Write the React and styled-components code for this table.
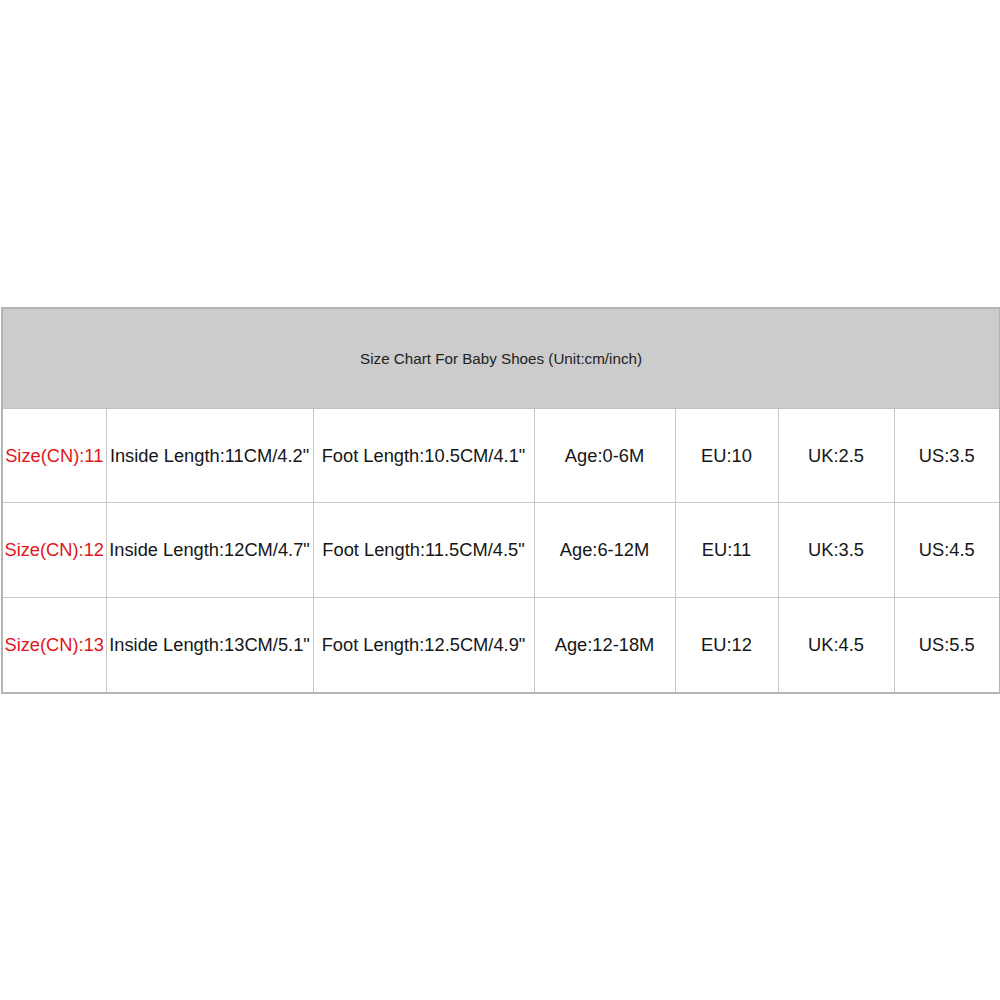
import React from 'react';
import styled, { createGlobalStyle } from 'styled-components';

const GlobalStyle = createGlobalStyle`
  html, body {
    margin: 0;
    padding: 0;
    background: #fff;
  }
  body {
    font-family: "Liberation Sans", Arial, sans-serif;
  }
`;

const Page = styled.div`
  width: 1000px;
  height: 1000px;
  padding: 307px 0 0 1px;
  box-sizing: border-box;
`;

const Table = styled.table`
  width: 998px;
  table-layout: fixed;
  border-collapse: collapse;
  border: 2px solid #b4b4b4;
  background: #fff;
`;

const HeaderCell = styled.th`
  height: 99px;
  padding: 0;
  background: #cccccc;
  color: #222;
  font-weight: normal;
  font-size: 15.2px;
  text-align: center;
  vertical-align: middle;
  border-bottom: 1px solid #c4c4c4;
`;

const Td = styled.td`
  height: ${p => p.$h}px;
  padding: 0;
  border: 1px solid #c8c8c8;
  font-size: 18.3px;
  color: ${p => (p.$red ? '#e0161b' : '#161616')};
  text-align: center;
  vertical-align: middle;
  white-space: nowrap;
  overflow: hidden;
`;

const columns = [104, 207, 221, 141, 103, 116, 106];
const rowHeights = [93, 94, 94];

const rows = [
  ['Size(CN):11', 'Inside Length:11CM/4.2"', 'Foot Length:10.5CM/4.1"', 'Age:0-6M', 'EU:10', 'UK:2.5', 'US:3.5'],
  ['Size(CN):12', 'Inside Length:12CM/4.7"', 'Foot Length:11.5CM/4.5"', 'Age:6-12M', 'EU:11', 'UK:3.5', 'US:4.5'],
  ['Size(CN):13', 'Inside Length:13CM/5.1"', 'Foot Length:12.5CM/4.9"', 'Age:12-18M', 'EU:12', 'UK:4.5', 'US:5.5'],
];

const App = () => (
  <>
    <GlobalStyle />
    <Page>
      <Table>
        <colgroup>
          {columns.map((w, i) => (
            <col key={i} style={{ width: w }} />
          ))}
        </colgroup>
        <thead>
          <tr>
            <HeaderCell colSpan={7}>Size Chart For Baby Shoes (Unit:cm/inch)</HeaderCell>
          </tr>
        </thead>
        <tbody>
          {rows.map((r, ri) => (
            <tr key={r[0]}>
              {r.map((c, i) => (
                <Td key={i} $h={rowHeights[ri]} $red={i === 0}>{c}</Td>
              ))}
            </tr>
          ))}
        </tbody>
      </Table>
    </Page>
  </>
);

export default App;
